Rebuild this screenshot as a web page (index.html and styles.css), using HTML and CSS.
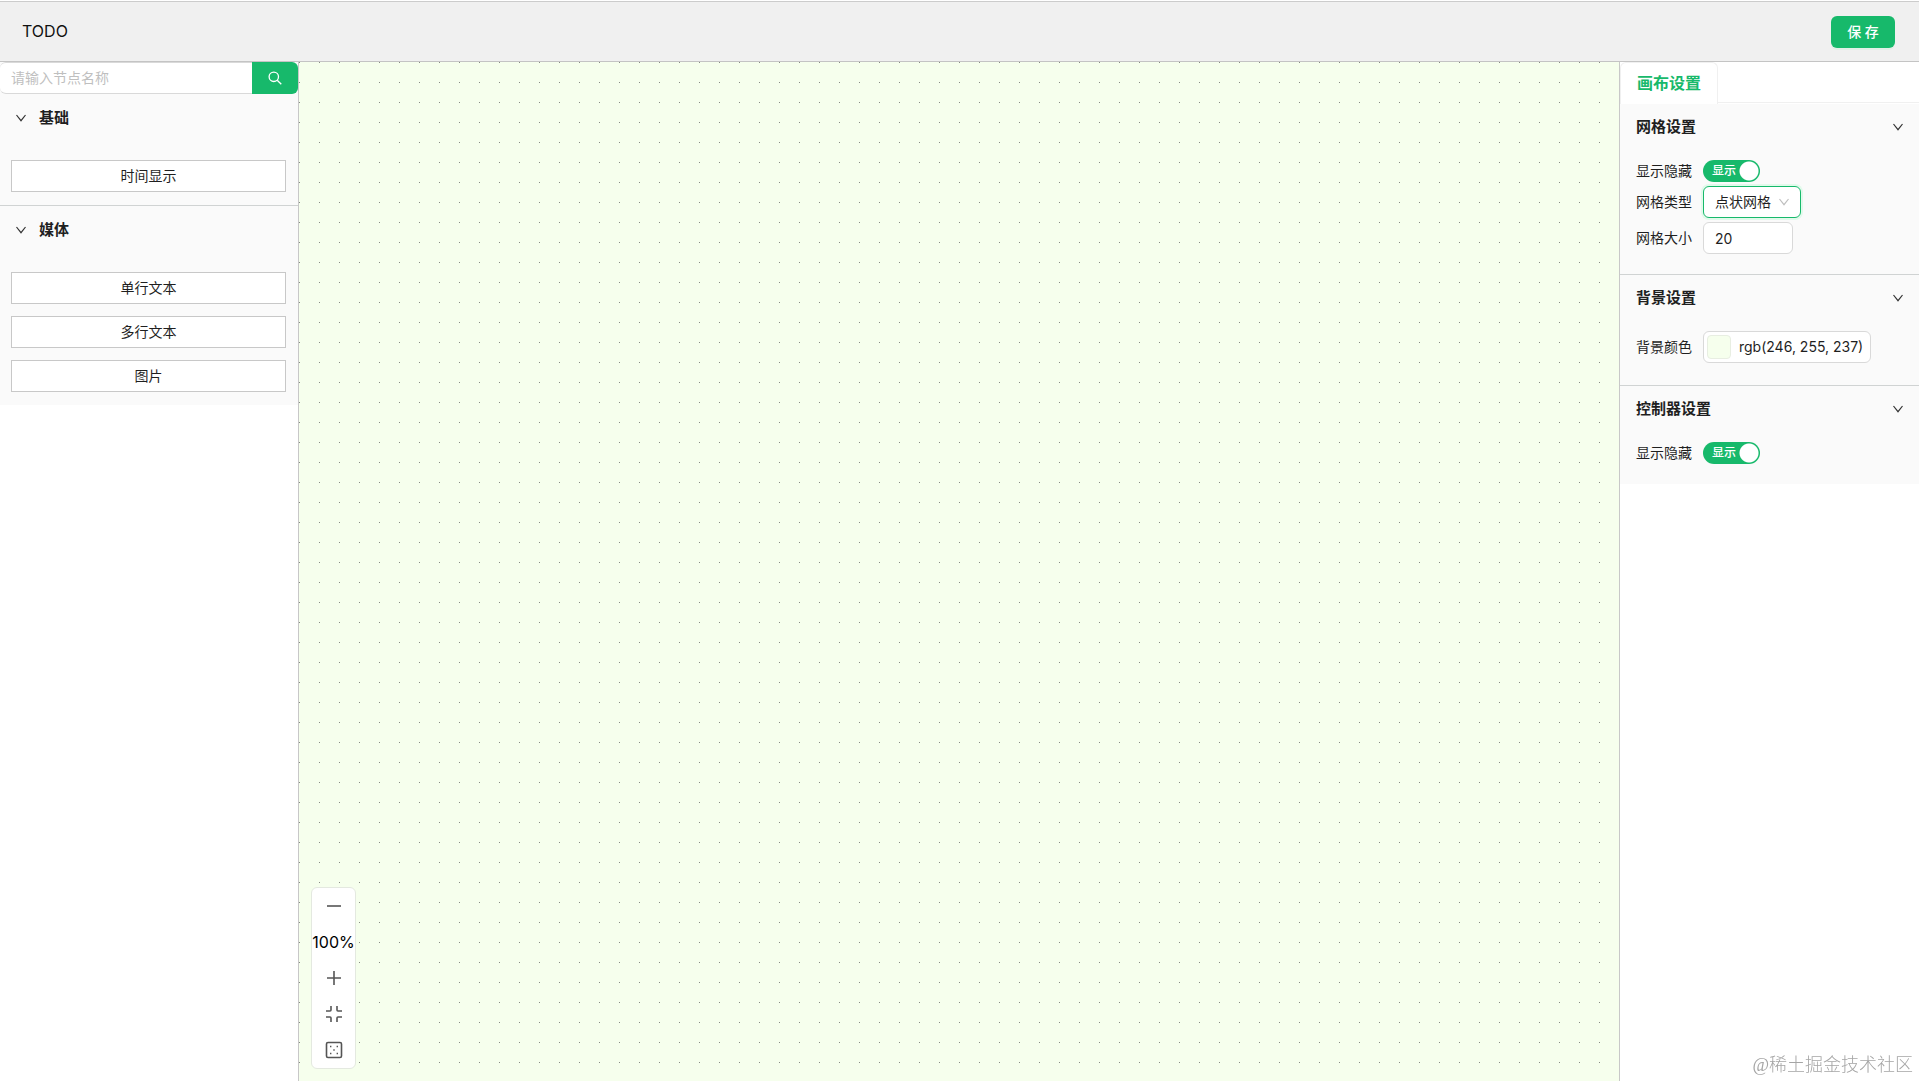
FILE: index.html
```html
<!DOCTYPE html>
<html lang="zh-CN">
  <head>
    <meta charset="utf-8">
    <title>TODO</title>
    <link rel="stylesheet" href="styles.css">
  </head>
  <body>
    <header class="header">
      <div class="title">TODO</div>
      <button type="button" class="save">保 存</button>
    </header>

    <main class="main">
      <!-- node list -->
      <aside class="left">
        <form class="search">
          <input type="text" aria-label="节点名称" placeholder="请输入节点名称">
          <button type="button" aria-label="搜索">
            <svg width="14" height="14" viewBox="0 0 14 14" fill="none" stroke="currentColor" stroke-width="1.3">
              <circle cx="5.8" cy="5.8" r="4.7"/>
              <path d="M9.2 9.2L13.3 13.3"/>
            </svg>
          </button>
        </form>
        <section class="group">
          <h3><svg class="arrow" viewBox="0 0 12 12"><path d="M1.5 3L6 8.7L10.5 3"/></svg>基础</h3>
          <div class="nodes">
            <button type="button">时间显示</button>
          </div>
        </section>
        <section class="group">
          <h3><svg class="arrow" viewBox="0 0 12 12"><path d="M1.5 3L6 8.7L10.5 3"/></svg>媒体</h3>
          <div class="nodes">
            <button type="button">单行文本</button>
            <button type="button">多行文本</button>
            <button type="button">图片</button>
          </div>
        </section>
      </aside>

      <!-- canvas -->
      <div class="canvas">
        <div class="controls">
          <button type="button" aria-label="缩小">
            <svg width="16" height="16" viewBox="0 0 16 16"><path d="M1 8H15"/></svg>
          </button>
          <span>100%</span>
          <button type="button" aria-label="放大">
            <svg width="16" height="16" viewBox="0 0 16 16"><path d="M1 8H15M8 1V15"/></svg>
          </button>
          <button type="button" aria-label="适应画布">
            <svg width="16" height="16" viewBox="0 0 16 16"><path d="M0 5H4Q5 5 5 4V0M11 0V4Q11 5 12 5H16M0 11H4Q5 11 5 12V16M11 16V12Q11 11 12 11H16"/></svg>
          </button>
          <button type="button" aria-label="网格">
            <svg width="18" height="18" viewBox="0 0 18 18">
              <rect x="1.5" y="1.5" width="15" height="15" rx="1.5"/>
              <path class="dots" d="M5 5.5H6.4M11.6 5.5H13M8.3 9H9.7M5 12.5H6.4M11.6 12.5H13"/>
            </svg>
          </button>
        </div>
      </div>

      <!-- settings -->
      <aside class="right">
        <div class="tabs">
          <button type="button" class="tab">画布设置</button>
        </div>
        <section class="panel">
          <h3>网格设置<svg class="arrow" viewBox="0 0 12 12"><path d="M1.5 3L6 8.7L10.5 3"/></svg></h3>
          <div class="fields">
            <div class="row">
              <label for="grid-show">显示隐藏</label>
              <div class="switch">
                <input type="checkbox" id="grid-show" checked>
                <span>显示</span>
              </div>
            </div>
            <div class="row">
              <label for="grid-type">网格类型</label>
              <div class="select">
                <select id="grid-type">
                  <option>点状网格</option>
                </select>
                <svg class="arrow" viewBox="0 0 12 12"><path d="M1.5 3L6 8.7L10.5 3"/></svg>
              </div>
            </div>
            <div class="row">
              <label for="grid-size">网格大小</label>
              <input type="text" id="grid-size" class="number" value="20">
            </div>
          </div>
        </section>
        <section class="panel">
          <h3>背景设置<svg class="arrow" viewBox="0 0 12 12"><path d="M1.5 3L6 8.7L10.5 3"/></svg></h3>
          <div class="fields">
            <div class="row color-row">
              <label for="bg-color">背景颜色</label>
              <button type="button" id="bg-color" class="color"><i></i>rgb(246, 255, 237)</button>
            </div>
          </div>
        </section>
        <section class="panel">
          <h3>控制器设置<svg class="arrow" viewBox="0 0 12 12"><path d="M1.5 3L6 8.7L10.5 3"/></svg></h3>
          <div class="fields">
            <div class="row">
              <label for="control-show">显示隐藏</label>
              <div class="switch">
                <input type="checkbox" id="control-show" checked>
                <span>显示</span>
              </div>
            </div>
          </div>
        </section>
      </aside>
    </main>

    <div class="watermark">@稀土掘金技术社区</div>
  </body>
</html>
```

FILE: styles.css
```css
* {
  box-sizing: border-box;
}

body {
  margin: 0;
  padding-top: 1px;
  height: 100vh;
  display: flex;
  flex-direction: column;
  overflow: hidden;
  font-family: Inter, "Noto Sans CJK SC", sans-serif;
  font-size: 14px;
  line-height: 22px;
  color: #1f1f1f;
  background: #fff;
}

button,
input,
select {
  font: inherit;
  color: inherit;
  margin: 0;
}

button {
  padding: 0;
  cursor: pointer;
}

h3 {
  margin: 0;
  height: 46px;
  display: flex;
  align-items: center;
  font-size: 15px;
  font-weight: bold;
}

.arrow {
  width: 12px;
  height: 12px;
  fill: none;
  stroke: #333;
  stroke-width: 1.2;
}

/* header */
.header {
  display: flex;
  align-items: center;
  justify-content: space-between;
  height: 61px;
  padding: 0 24px 0 22px;
  background: #f0f0f0;
  border-top: 1px solid #ccc;
  border-bottom: 1px solid #c4c4c4;
}

.title {
  padding-bottom: 2px;
  font-size: 16px;
  color: #111;
}

.save {
  width: 64px;
  height: 32px;
  border: none;
  border-radius: 6px;
  background: #17b96b;
  color: #fff;
  font-weight: 500;
  box-shadow: 0 2px 0 rgba(5, 255, 105, 0.06);
}

.main {
  flex: 1;
  display: flex;
  min-height: 0;
}

/* left */
.left {
  width: 299px;
  border-right: 1px solid #c8c8c8;
}

.search {
  display: flex;
  height: 32px;
  background: #fafafa;
}

.search input {
  flex: 1;
  min-width: 0;
  padding: 0 11px;
  border: 1px solid #d9d9d9;
  border-left: none;
  border-right: none;
  border-radius: 6px 0 0 6px;
  background: #fff;
}

.search input::placeholder {
  color: #bfbfbf;
}

.search button {
  width: 46px;
  display: flex;
  align-items: center;
  justify-content: center;
  border: none;
  border-radius: 0 6px 6px 0;
  background: #17b96b;
  color: #fff;
}

.group {
  background: #fafafa;
}

.group + .group {
  border-top: 1px solid #d0d3d3;
}

.group h3 {
  height: 48px;
  gap: 12px;
  padding-left: 15px;
}

.nodes {
  display: flex;
  flex-direction: column;
  gap: 12px;
  padding: 18px 12px 13px 11px;
}

.nodes button {
  height: 32px;
  border: 1px solid #c8c8c8;
  background: #fff;
}

/* canvas */
.canvas {
  flex: 1;
  position: relative;
  background: conic-gradient(from 270deg at 1px 1px, #888c85 90deg, transparent 0) 0 0 / 20px 20px, #f6ffed;
}

.controls {
  position: absolute;
  left: 12px;
  bottom: 12px;
  width: 45px;
  display: flex;
  flex-direction: column;
  border: 1px solid #e4e9e0;
  border-radius: 6px;
  background: #fff;
}

.controls button,
.controls span {
  height: 36px;
  display: flex;
  align-items: center;
  justify-content: center;
  border: none;
  background: none;
  font-size: 16px;
  color: #000;
}

.controls svg {
  fill: none;
  stroke: #555;
  stroke-width: 1.6;
}

.controls .dots {
  stroke-width: 1.4;
}

/* right */
.right {
  width: 300px;
  border-left: 1px solid #c8c8c8;
}

.tabs {
  height: 42px;
  display: flex;
  background: linear-gradient(#f0f0f0, #f0f0f0) 0 40px / 100% 1px no-repeat, #fff;
}

.tab {
  padding: 0 16px 2px;
  border: 1px solid #f0f0f0;
  border-bottom: none;
  border-radius: 6px 6px 0 0;
  background: #fff;
  color: #17b96b;
  font-size: 16px;
  font-weight: bold;
}

.panel {
  background: #fafafa;
}

.panel + .panel {
  border-top: 1px solid #d0d3d3;
}

.panel h3 {
  justify-content: space-between;
  padding: 0 15px 0 16px;
}

.fields {
  display: flex;
  flex-direction: column;
  gap: 4px;
  padding: 10px 16px 20px;
}

.row {
  display: flex;
  align-items: center;
  gap: 11px;
}

.color-row {
  padding-bottom: 2px;
}

.switch {
  position: relative;
  width: 57px;
  height: 22px;
  color: #fff;
}

.switch input {
  appearance: none;
  display: block;
  width: 100%;
  height: 100%;
  border-radius: 11px;
  background: radial-gradient(circle at 46px 11px, #fff 9px, transparent 10px), #17b96b;
}

.switch span {
  position: absolute;
  left: 9px;
  top: 0;
  font-size: 12px;
  font-weight: 500;
  pointer-events: none;
}

.select {
  position: relative;
  width: 98px;
  height: 32px;
}

.select select {
  appearance: none;
  width: 100%;
  height: 100%;
  padding: 0 11px;
  border: 1px solid #17b96b;
  border-radius: 6px;
  background: #fff;
  box-shadow: 0 0 0 2px rgba(5, 255, 105, 0.1);
}

.select .arrow {
  position: absolute;
  right: 11px;
  top: 10px;
  stroke: #bfbfbf;
  pointer-events: none;
}

.number {
  width: 90px;
  height: 32px;
  padding: 0 11px;
  border: 1px solid #d9d9d9;
  border-radius: 6px;
  background: #fff;
}

.color {
  height: 32px;
  display: flex;
  align-items: center;
  gap: 8px;
  padding: 0 7px 0 3px;
  border: 1px solid #d9d9d9;
  border-radius: 6px;
  background: #fff;
}

.color i {
  width: 24px;
  height: 24px;
  border: 1px solid #e8eee2;
  border-radius: 4px;
  background: #f6ffed;
}

.watermark {
  position: fixed;
  right: 6px;
  bottom: 5px;
  font-family: "Liberation Serif", "Noto Sans CJK SC", serif;
  font-size: 18px;
  font-weight: 300;
  color: #a5a5a5;
}
```
